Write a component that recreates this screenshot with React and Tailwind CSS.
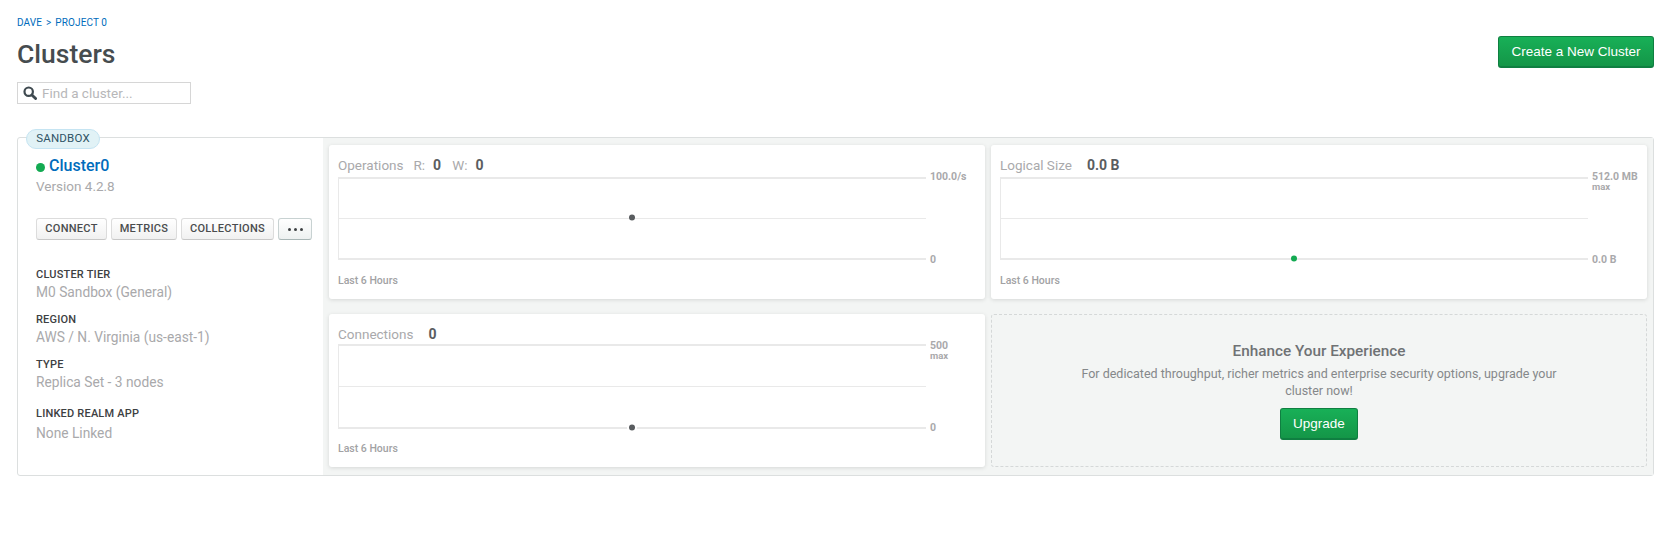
import React from "react";

const ak = "font-['Roboto','Liberation_Sans',sans-serif]";

function Axis({ top, topSub, bottom, tall }) {
  return (
    <div className={`w-[55px] ml-1 -my-[6px] flex flex-col justify-between text-[10.5px] leading-[12px] font-bold text-[#a9a9ab] whitespace-nowrap ${tall ? "pt-[2px] pb-[1px]" : ""}`}>
      <div>
        <div>{top}</div>
        {topSub && <div className="text-[9.5px] leading-[8px]">{topSub}</div>}
      </div>
      <div>{bottom}</div>
    </div>
  );
}

function Plot({ dotColor, halo, tall }) {
  const h = tall ? 85 : 83;
  const mid = tall ? 42 : 41;
  const base = h - 2;
  const onBase = halo || dotColor === "#13aa52";
  return (
    <svg className="block w-[588px] overflow-visible" height={h} viewBox={`0 0 588 ${h}`}>
      <rect x="0" y="0" width="588" height="2" fill="#e9e9e9" />
      <rect x="0" y="0" width="1" height={h} fill="#e9e9e9" />
      <rect x="0" y={mid} width="588" height="1" fill="#e9e9e9" />
      <rect x="0" y={base} width="588" height="2" fill="#e9e9e9" />
      {halo && <circle cx="294" cy={base + 0.5} r="5" fill="#fff" />}
      <circle cx="294" cy={onBase ? base + 0.5 : mid - 0.5} r="3" fill={dotColor} />
    </svg>
  );
}

function ChartCard({ title, children, top, topSub, bottom, dotColor = "#595c5f", halo, tall }) {
  return (
    <div className={`bg-white rounded-[3px] shadow-[0_1px_4px_rgba(0,0,0,0.12)] pl-[9px] overflow-hidden pt-[11px] ${ak}`}>
      <div className={`flex items-baseline text-[13.5px] leading-[18px] text-[#a9a9ab] ${tall ? "h-[19px]" : "h-[21px]"}`}>
        <span>{title}</span>
        {children}
      </div>
      <div className="flex">
        <Plot dotColor={dotColor} halo={halo} tall={tall} />
        <Axis top={top} topSub={topSub} bottom={bottom} tall={tall} />
      </div>
      <div className={`text-[10.5px] leading-[12px] font-medium text-[#a2a2a4] ${tall ? "mt-[14px]" : "mt-[15px]"}`}>Last 6 Hours</div>
    </div>
  );
}

function SmallBtn({ children, w }) {
  return (
    <button className={`h-[22px] ${w} rounded-[3px] border border-[#dcdcdc] border-b-[#c8c8c8] bg-gradient-to-b from-white to-[#f1f1f1] text-[11px] font-medium tracking-[0.3px] text-[#4a4c4e] ${ak}`}>
      {children}
    </button>
  );
}

function Field({ label, value, cls = "", gap = "mt-[1px]" }) {
  return (
    <div className={cls}>
      <div className="text-[11px] leading-[14px] font-medium tracking-[0.2px] text-[#3d4042]">{label}</div>
      <div className={`text-[13.75px] leading-[18px] text-[#a9a9ab] ${gap}`}>{value}</div>
    </div>
  );
}

export default function App() {
  return (
    <div className={`w-[1664px] h-[552px] bg-white pl-[17px] pr-[10px] pt-[16px] overflow-hidden ${ak}`}>
      <div className="flex items-start justify-between">
        <div>
          <div className="mt-[1px] text-[10px] leading-[12px] uppercase text-[#006cbc] tracking-[0.1px]">
            <span>Dave</span>
            <span className="mx-[4px]">&gt;</span>
            <span>Project 0</span>
          </div>
          <h1 className="mt-[8px] text-[26.5px] leading-[34px] font-medium text-[#464c4f]">Clusters</h1>
          <div className="mt-[11px] w-[174px] h-[22px] border border-[#d6d6d6] flex items-center pl-[5px] gap-[5px]">
            <svg width="14" height="14" viewBox="0 0 14 14" fill="none" stroke="#3f4a50" strokeWidth="2.2">
              <circle cx="5.7" cy="5.7" r="4.2" />
              <path d="M8.9 8.9 L12.6 12.6" strokeLinecap="round" strokeWidth="2.8" />
            </svg>
            <span className="text-[13.5px] text-[#b7b7b9]">Find a cluster...</span>
          </div>
        </div>
        <button className="mt-[20px] h-[32px] w-[156px] pt-[1px] rounded-[3px] border border-[#0f7f41] border-b-2 bg-gradient-to-b from-[#18b057] to-[#149648] text-white text-[13.5px] font-['Liberation_Sans',sans-serif]">
          Create a New Cluster
        </button>
      </div>

      <div className="relative flex h-[339px] w-[1637px] border border-[#dcdfdf] rounded-[3px] mt-[33px]">
        <div className="absolute left-[8px] -top-[9px] h-[20px] w-[74px] rounded-full border border-[#c5e4f2] bg-[#e1f2f6] flex items-center justify-center text-[11.5px] tracking-[0.2px] text-[#2f5465]">
          SANDBOX
        </div>
        <div className="w-[305px] shrink-0 pl-[18px] pt-[18px]">
          <div className="flex items-center gap-[4px] h-[20px]">
            <span className="w-[9px] h-[9px] rounded-full bg-[#13aa52] mt-[2px]"></span>
            <span className="text-[16px] font-medium text-[#006cbc]">Cluster0</span>
          </div>
          <div className="mt-[1px] text-[13.5px] leading-[18px] text-[#a9a9ab]">Version 4.2.8</div>
          <div className="mt-[23px] flex gap-[4px]">
            <SmallBtn w="w-[71px]">CONNECT</SmallBtn>
            <SmallBtn w="w-[66px]">METRICS</SmallBtn>
            <SmallBtn w="w-[93px]">COLLECTIONS</SmallBtn>
            <button className="h-[22px] w-[34px] rounded-[3px] border border-[#c8d2d2] border-b-[#a9b6b6] bg-gradient-to-b from-white to-[#eef1f1] flex items-center justify-center gap-[3px]">
              <span className="w-[3px] h-[3px] rounded-full bg-[#3d4042]"></span>
              <span className="w-[3px] h-[3px] rounded-full bg-[#3d4042]"></span>
              <span className="w-[3px] h-[3px] rounded-full bg-[#3d4042]"></span>
            </button>
          </div>
          <div className="mt-[28px]">
            <Field label="CLUSTER TIER" value="M0 Sandbox (General)" />
            <Field label="REGION" value="AWS / N. Virginia (us-east-1)" cls="mt-[12px]" />
            <Field label="TYPE" value="Replica Set - 3 nodes" cls="mt-[12px]" />
            <Field label="LINKED REALM APP" value="None Linked" cls="mt-[16px]" gap="mt-[3px]" />
          </div>
        </div>

        <div className="flex-1 bg-[#f3f5f4] grid grid-cols-[656px_656px] grid-rows-[154px_153px] gap-x-[6px] gap-y-[15px] pl-[6px] pt-[7px]">
          <ChartCard title="Operations" top="100.0/s" bottom="0">
            <span className="ml-[10px]">R:</span>
            <span className="ml-[8px] text-[14px] font-bold text-[#5a5d60]">0</span>
            <span className="ml-[11px]">W:</span>
            <span className="ml-[8px] text-[14px] font-bold text-[#5a5d60]">0</span>
          </ChartCard>
          <ChartCard title="Logical Size" top="512.0 MB" topSub="max" bottom="0.0 B" dotColor="#13aa52">
            <span className="ml-[15px] text-[14px] font-bold text-[#5a5d60]">0.0 B</span>
          </ChartCard>
          <ChartCard title="Connections" top="500" topSub="max" bottom="0" halo tall>
            <span className="ml-[15px] text-[14px] font-bold text-[#5a5d60]">0</span>
          </ChartCard>
          <div className="border border-dashed border-[#d5d8d8] rounded-[3px] flex flex-col items-center pt-[26px]">
            <div className="text-[15.3px] leading-[20px] font-medium text-[#6f7274]">Enhance Your Experience</div>
            <div className="mt-[4px] w-[490px] text-center text-[12.5px] leading-[17px] text-[#85888a]">
              For dedicated throughput, richer metrics and enterprise security options, upgrade your cluster now!
            </div>
            <button className="mt-[9px] h-[32px] w-[78px] pt-[1px] rounded-[3px] border border-[#0f7f41] border-b-2 bg-gradient-to-b from-[#18b057] to-[#149648] text-white text-[13.5px] font-['Liberation_Sans',sans-serif]">
              Upgrade
            </button>
          </div>
        </div>
      </div>
    </div>
  );
}
